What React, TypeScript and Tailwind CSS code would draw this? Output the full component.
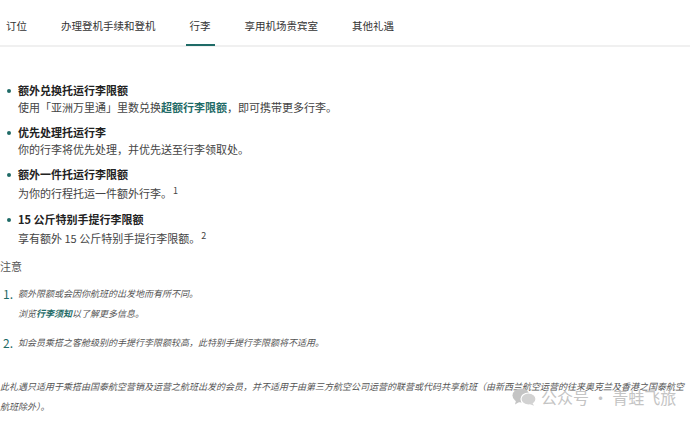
import type { ReactNode } from 'react';

const tabs = ['订位', '办理登机手续和登机', '行李', '享用机场贵宾室', '其他礼遇'];

interface Perk {
  title: string;
  body: ReactNode;
  tall?: boolean;
}

const perks: Perk[] = [
  {
    title: '额外兑换托运行李限额',
    body: (
      <>
        使用「亚洲万里通」里数兑换<span className="font-bold text-[#1f6b67]">超额行李限额</span>，即可携带更多行李。
      </>
    ),
  },
  { title: '优先处理托运行李', body: '你的行李将优先处理，并优先送至行李领取处。' },
  {
    title: '额外一件托运行李限额',
    body: (
      <>
        为你的行程托运一件额外行李。<sup className="ml-[1px] text-[9px]">1</sup>
      </>
    ),
    tall: true,
  },
  {
    title: '15 公斤特别手提行李限额',
    body: (
      <>
        享有额外 15 公斤特别手提行李限额。<sup className="ml-[1px] text-[9px]">2</sup>
      </>
    ),
    tall: true,
  },
];

function WeChatMark() {
  return (
    <svg width="25" height="18" viewBox="0 0 25 18" fill="#c4c4c4">
      <ellipse cx="9" cy="7.5" rx="8.5" ry="7" />
      <path d="M4 12.5 L3 16.5 L8 13.5 Z" />
      <ellipse cx="16.5" cy="11" rx="7.5" ry="6" fill="#d2d2d2" stroke="#fff" strokeWidth="1.2" />
      <path d="M20.5 15 L22 17.8 L17.5 16 Z" fill="#d2d2d2" />
    </svg>
  );
}

export default function App() {
  return (
    <div
      className="relative w-[690px] h-[424px] overflow-hidden bg-white text-[#333]"
      style={{ fontFamily: '"Noto Sans CJK SC", "Noto Sans", sans-serif' }}
    >
      {/* Tabs */}
      <nav className="flex h-[47px] border-b-2 border-[#f0f0f0] pl-[6px]">
        {tabs.map((t) => (
          <div
            key={t}
            className="relative pr-[34px] pt-[18px] text-[10.5px] leading-[16px] text-[#333]"
          >
            {t}
            {t === '行李' && (
              <span className="absolute left-[-4px] right-[30px] top-[44px] h-[2px] bg-[#1f6b67]" />
            )}
          </div>
        ))}
      </nav>

      {/* Baggage perks */}
      <ul className="mt-[35px] flex flex-col gap-[8px]">
        {perks.map((p) => (
          <li key={p.title} className="relative pl-[18px] text-[11px]">
            <span className="absolute left-[7px] top-[7px] h-[4px] w-[4px] rounded-full bg-[#1f6b67]" />
            <div className="font-bold leading-[17px] text-[#222]">{p.title}</div>
            <div className={`${p.tall ? 'leading-[20px]' : 'leading-[17px]'} text-[#444]`}>{p.body}</div>
          </li>
        ))}
      </ul>

      <div className="mt-[10px] text-[11px] leading-[17px] text-[#555]">注意</div>

      {/* Footnotes */}
      <ol className="mt-[9px] flex flex-col gap-[9px]">
        <li className="flex">
          <span className="w-[18px] pl-[3px] text-[12px] leading-[20px] text-[#1f6b67]">1.</span>
          <div className="text-[9px] italic leading-[20px] text-[#555]">
            <div>额外限额或会因你航班的出发地而有所不同。</div>
            <div>
              浏览<span className="font-bold text-[#1f6b67]">行李须知</span>以了解更多信息。
            </div>
          </div>
        </li>
        <li className="flex">
          <span className="w-[18px] pl-[3px] text-[12px] leading-[20px] text-[#1f6b67]">2.</span>
          <div className="text-[9px] italic leading-[20px] text-[#555]">
            如会员乘搭之客舱级别的手提行李限额较高，此特别手提行李限额将不适用。
          </div>
        </li>
      </ol>

      <p className="mt-[24px] text-[9px] italic leading-[20px] text-[#555]">
        此礼遇只适用于乘搭由国泰航空营销及运营之航班出发的会员，并不适用于由第三方航空公司运营的联营或代码共享航班（由新西兰航空运营的往来奥克兰及香港之国泰航空
        <br />
        航班除外）。
      </p>

      {/* Account watermark */}
      <div className="absolute left-[512px] top-[387px] flex items-center gap-[4px] whitespace-nowrap">
        <WeChatMark />
        <span className="text-[16px] leading-[20px] text-[#c4c4c4]">公众号 · 青蛙飞旅</span>
      </div>
    </div>
  );
}
